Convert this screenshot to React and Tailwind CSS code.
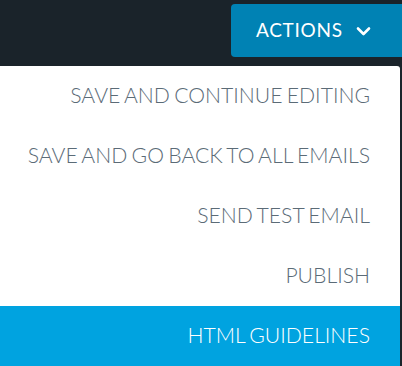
import React from 'react';

const items = [
  'SAVE AND CONTINUE EDITING',
  'SAVE AND GO BACK TO ALL EMAILS',
  'SEND TEST EMAIL',
  'PUBLISH',
];

export default function App() {
  return (
    <div className="w-[402px] h-[366px] overflow-hidden bg-[#1a232a] font-['Lato',sans-serif]">
      <div className="h-[66px] flex justify-end items-start pt-[4px]">
        <button className="w-[171px] h-[53px] bg-[#0082b4] rounded-l-[4px] flex items-center pl-[25px] gap-[13px] text-white text-[19px] tracking-[0.7px]">
          <span>ACTIONS</span>
          <svg width="15" height="10" viewBox="0 0 15 10" fill="none">
            <path d="M2 2.5 L7.5 8 L13 2.5" stroke="white" strokeWidth="2.6" strokeLinecap="round" strokeLinejoin="round" />
          </svg>
        </button>
      </div>
      <div className="w-[400px] bg-white rounded-tr-[3px] flex flex-col">
        {items.map((label) => (
          <div
            key={label}
            className="h-[60px] flex items-center justify-end pr-[30px] text-[21.2px] [word-spacing:-1.5px] font-light text-[#5b6b77]"
          >
            {label}
          </div>
        ))}
        <div className="h-[60px] flex items-center justify-end pr-[30px] text-[21.2px] [word-spacing:-1.5px] font-light text-white bg-[#00a3e0]">
          HTML GUIDELINES
        </div>
      </div>
    </div>
  );
}
